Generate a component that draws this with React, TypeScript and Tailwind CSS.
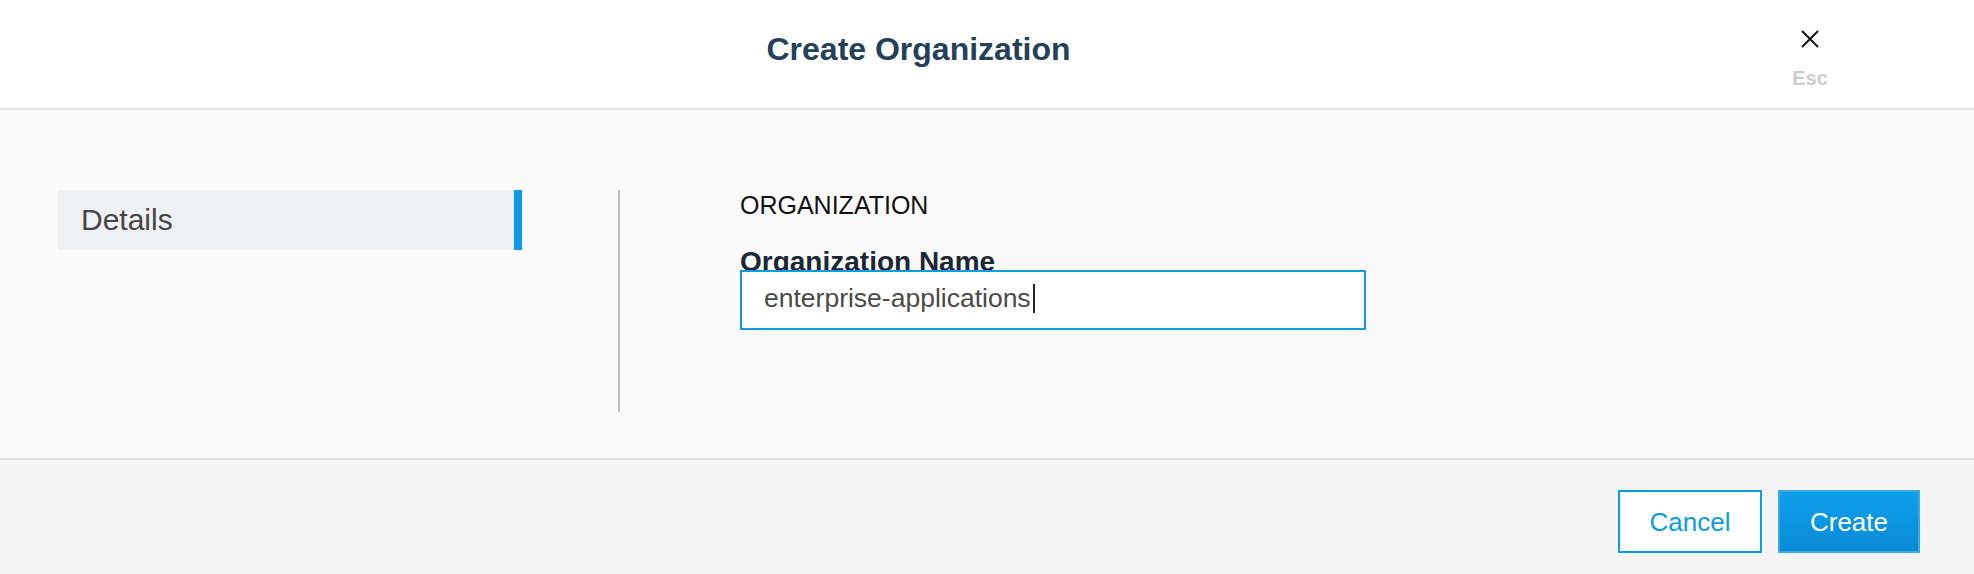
import React from "react";

export default function App() {
  const font = { fontFamily: '"Liberation Sans", Arial, Helvetica, sans-serif' };
  return (
    <div className="w-[1974px] h-[574px] flex flex-col bg-[#f5f5f5] overflow-hidden" style={font}>
      {/* Header */}
      <div className="h-[110px] shrink-0 bg-white border-b-2 border-[#dfe4e8] flex pl-[63px] pr-[128px]">
        <div className="flex-1 text-center pt-[33px]">
          <h1 className="text-[32px] leading-[32px] font-bold text-[#25415a]">Create Organization</h1>
        </div>
        <div className="w-[72px] flex flex-col items-center pt-[30px]">
          <svg width="18" height="18" viewBox="0 0 18 18" className="block">
            <path d="M1 1 L17 17 M17 1 L1 17" stroke="#111" strokeWidth="2" fill="none" />
          </svg>
          <span className="mt-[20px] text-[20px] leading-[20px] font-bold text-[#cdcdcd]">Esc</span>
        </div>
      </div>

      {/* Body */}
      <div className="h-[348px] shrink-0 bg-[#fafafa] flex pt-[80px] pl-[58px]">
        <div className="w-[464px] h-[60px] bg-[#eff0f2] border-r-[8px] border-[#0d9be6] pl-[23px] text-[30px] leading-[60px] text-[#464646]">
          Details
        </div>
        <div className="ml-[96px] w-[2px] h-[222px] bg-[#b9c0ca]" />
        <div className="ml-[120px] flex flex-col">
          <div className="text-[25px] leading-[31px] text-[#111]">ORGANIZATION</div>
          <div className="mt-[33px] text-[28px] leading-[16px] font-bold text-[#1b2733] whitespace-nowrap">
            Organization Name
          </div>
          <div className="relative w-[626px] h-[60px] bg-white border-2 border-[#0d9be6] flex items-center pl-[22px] pb-[4px]">
            <span className="text-[26.5px] leading-[30px] text-[#4a4a4a]">enterprise-applications</span>
            <span className="ml-[2px] w-[2px] h-[29px] bg-[#222]" />
          </div>
        </div>
      </div>

      {/* Footer */}
      <div className="flex-1 bg-[#f5f5f5] border-t-2 border-[#e2e3e4] flex justify-end items-start pt-[30px] pr-[54px] gap-[16px]">
        <button className="w-[144px] h-[63px] bg-white border-2 border-[#0d9be6] text-[#0d9be6] text-[26px] leading-[26px]">
          Cancel
        </button>
        <button className="w-[142px] h-[63px] bg-gradient-to-b from-[#0ea0ea] to-[#0a8ad7] border-2 border-[#3ea8e6] text-white text-[26px] leading-[26px]">
          Create
        </button>
      </div>
    </div>
  );
}
